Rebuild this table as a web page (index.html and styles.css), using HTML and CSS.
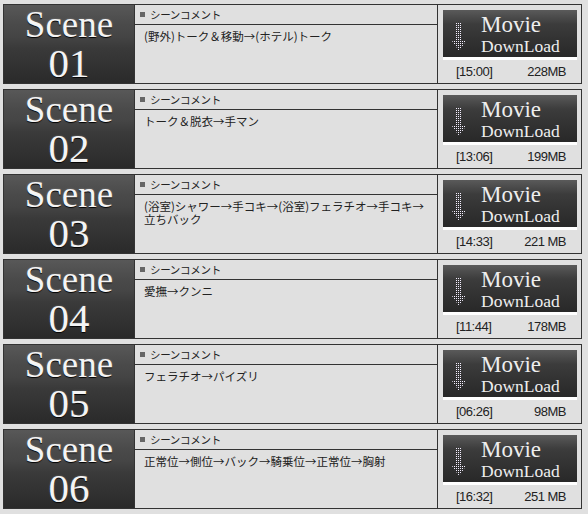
FILE: index.html
```html
<!DOCTYPE html>
<html lang="ja">
<head>
  <meta charset="UTF-8" />
  <title>Scene List</title>
  <link rel="stylesheet" href="styles.css">
</head>
<body>

  <svg width="0" height="0" class="defs">
    <defs>
      <pattern id="dots" width="2" height="2" patternUnits="userSpaceOnUse">
        <rect x="0" y="0" width="1" height="1" fill="#f4eeff"/>
      </pattern>
    </defs>
  </svg>

  <div class="scene">
    <div class="scene-title"><span class="scene-word">Scene</span><span class="scene-no">01</span></div>
    <div class="comment">
      <div class="comment-head"><span class="sq"></span>シーンコメント</div>
      <div class="comment-body">(野外)トーク＆移動→(ホテル)トーク</div>
    </div>
    <div class="dl">
      <div class="dl-btn">
        <svg class="arrow" width="14" height="28" viewBox="0 0 14 28"><path d="M4 0h6v18h4l-7 10l-7-10h4z" fill="url(#dots)"/></svg>
        <span class="dl-text"><span class="movie">Movie</span><span class="download">DownLoad</span></span>
      </div>
      <div class="dl-info"><span>[15:00]</span><span>228MB</span></div>
    </div>
  </div>

  <div class="scene">
    <div class="scene-title"><span class="scene-word">Scene</span><span class="scene-no">02</span></div>
    <div class="comment">
      <div class="comment-head"><span class="sq"></span>シーンコメント</div>
      <div class="comment-body">トーク＆脱衣→手マン</div>
    </div>
    <div class="dl">
      <div class="dl-btn">
        <svg class="arrow" width="14" height="28" viewBox="0 0 14 28"><path d="M4 0h6v18h4l-7 10l-7-10h4z" fill="url(#dots)"/></svg>
        <span class="dl-text"><span class="movie">Movie</span><span class="download">DownLoad</span></span>
      </div>
      <div class="dl-info"><span>[13:06]</span><span>199MB</span></div>
    </div>
  </div>

  <div class="scene">
    <div class="scene-title"><span class="scene-word">Scene</span><span class="scene-no">03</span></div>
    <div class="comment">
      <div class="comment-head"><span class="sq"></span>シーンコメント</div>
      <div class="comment-body">(浴室)シャワー→手コキ→(浴室)フェラチオ→手コキ→<br>立ちバック</div>
    </div>
    <div class="dl">
      <div class="dl-btn">
        <svg class="arrow" width="14" height="28" viewBox="0 0 14 28"><path d="M4 0h6v18h4l-7 10l-7-10h4z" fill="url(#dots)"/></svg>
        <span class="dl-text"><span class="movie">Movie</span><span class="download">DownLoad</span></span>
      </div>
      <div class="dl-info"><span>[14:33]</span><span>221 MB</span></div>
    </div>
  </div>

  <div class="scene">
    <div class="scene-title"><span class="scene-word">Scene</span><span class="scene-no">04</span></div>
    <div class="comment">
      <div class="comment-head"><span class="sq"></span>シーンコメント</div>
      <div class="comment-body">愛撫→クンニ</div>
    </div>
    <div class="dl">
      <div class="dl-btn">
        <svg class="arrow" width="14" height="28" viewBox="0 0 14 28"><path d="M4 0h6v18h4l-7 10l-7-10h4z" fill="url(#dots)"/></svg>
        <span class="dl-text"><span class="movie">Movie</span><span class="download">DownLoad</span></span>
      </div>
      <div class="dl-info"><span>[11:44]</span><span>178MB</span></div>
    </div>
  </div>

  <div class="scene">
    <div class="scene-title"><span class="scene-word">Scene</span><span class="scene-no">05</span></div>
    <div class="comment">
      <div class="comment-head"><span class="sq"></span>シーンコメント</div>
      <div class="comment-body">フェラチオ→パイズリ</div>
    </div>
    <div class="dl">
      <div class="dl-btn">
        <svg class="arrow" width="14" height="28" viewBox="0 0 14 28"><path d="M4 0h6v18h4l-7 10l-7-10h4z" fill="url(#dots)"/></svg>
        <span class="dl-text"><span class="movie">Movie</span><span class="download">DownLoad</span></span>
      </div>
      <div class="dl-info"><span>[06:26]</span><span>98MB</span></div>
    </div>
  </div>

  <div class="scene">
    <div class="scene-title"><span class="scene-word">Scene</span><span class="scene-no">06</span></div>
    <div class="comment">
      <div class="comment-head"><span class="sq"></span>シーンコメント</div>
      <div class="comment-body">正常位→側位→バック→騎乗位→正常位→胸射</div>
    </div>
    <div class="dl">
      <div class="dl-btn">
        <svg class="arrow" width="14" height="28" viewBox="0 0 14 28"><path d="M4 0h6v18h4l-7 10l-7-10h4z" fill="url(#dots)"/></svg>
        <span class="dl-text"><span class="movie">Movie</span><span class="download">DownLoad</span></span>
      </div>
      <div class="dl-info"><span>[16:32]</span><span>251 MB</span></div>
    </div>
  </div>

</body>
</html>
```

FILE: styles.css
```css
body {
  margin: 0;
  padding: 4px 6px 0 3px;
  background: #e0e0e0;
  font-family: "Noto Sans CJK JP", "DejaVu Sans", sans-serif;
  color: #222;
}

.defs {
  position: absolute;
}

.scene {
  display: flex;
  height: 78px;
  border: 1px solid #333;
  margin-bottom: 5px;
  background: #e0e0e0;
}

.scene-title {
  width: 130px;
  display: flex;
  flex-direction: column;
  align-items: center;
  background: linear-gradient(#585858 0, #4a4a4a 25%, #454545 40%, #3a3a3a 55%, #333 75%, #2a2a2a 100%);
  border-right: 1px solid #333;
  font-family: "Liberation Serif", "DejaVu Serif", serif;
  color: #f4f4f4;
  text-shadow: 0 1px 1px #000, 0 0 2px rgba(255,255,255,0.3);
}

.scene-word {
  font-size: 37px;
  line-height: 36px;
  margin-top: 2px;
}

.scene-no {
  font-size: 41px;
  line-height: 40px;
}

.comment {
  width: 302px;
  display: flex;
  flex-direction: column;
  border-right: 1px solid #333;
}

.comment-head {
  height: 19px;
  border-bottom: 1px solid #333;
  font-size: 10.5px;
  letter-spacing: -0.3px;
  line-height: 19px;
  padding-left: 5px;
  display: flex;
  align-items: center;
}

.sq {
  width: 5px;
  height: 5px;
  background: #666;
  margin-right: 5px;
}

.comment-body {
  font-size: 11.5px;
  line-height: 13px;
  padding: 5px 0 0 9px;
}

.dl {
  flex: 1;
  padding: 5px 4px 0 5px;
}

.dl-btn {
  height: 47px;
  background: linear-gradient(#5a5a5a 0, #3c3c3c 30%, #333 60%, #282828 100%);
  border-bottom: 3px solid #fff;
  display: flex;
  align-items: center;
}

.arrow {
  margin: 6px 15px 0 9px;
}

.dl-text {
  display: flex;
  flex-direction: column;
  font-family: "Liberation Serif", "DejaVu Serif", serif;
  color: #eee;
}

.movie {
  font-size: 23px;
  line-height: 24px;
  margin-top: 1px;
}

.download {
  font-size: 17.5px;
  line-height: 19px;
}

.dl-info {
  display: flex;
  justify-content: space-between;
  padding: 4px 11px 0 13px;
  font-family: "Liberation Sans", Arial, sans-serif;
  font-size: 13px;
  letter-spacing: -0.5px;
  color: #222;
}
```
